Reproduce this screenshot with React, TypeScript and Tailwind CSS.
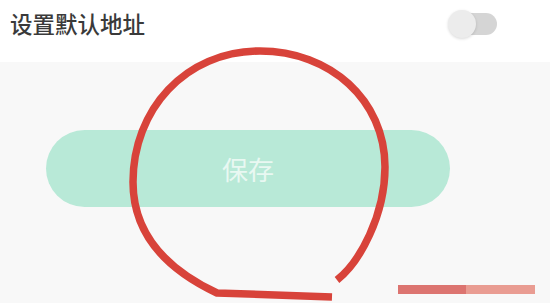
import React from 'react';

export default function App() {
  return (
    <div
      className="relative w-[550px] h-[303px] overflow-hidden bg-[#f8f8f8]"
      style={{ fontFamily: '"Noto Sans CJK SC", "Noto Sans", sans-serif' }}
    >
      {/* default address row */}
      <div className="bg-white pb-[15px]">
        <div className="flex h-[47px] items-center justify-between pl-[10px] pr-[53px]">
          <span className="text-[22.5px] leading-none font-medium text-[#3a3a3a]">设置默认地址</span>
          <div className="relative h-[22px] w-[42px] rounded-full bg-[#d5d5d5]">
            <div className="absolute left-[-7px] top-[-3px] h-[28px] w-[28px] rounded-full bg-[#ececec] shadow-[0_1px_3px_rgba(0,0,0,0.15)]" />
          </div>
        </div>
      </div>

      {/* save button */}
      <div className="pl-[46px] pt-[68px]">
        <button className="flex h-[77px] w-[404px] items-center justify-center rounded-full bg-[#b8e9d7] text-[26px] text-[#e9f8f2]">
          保存
        </button>
      </div>

      {/* red annotation */}
      <svg
        className="pointer-events-none absolute inset-0"
        width="550"
        height="303"
        viewBox="0 0 550 303"
      >
        <path
          d="M337 280 C360 262 385 215 385 167 C385 100 330 51 260 51 C185 51 133 110 133 182 C133 235 168 270 217 293 L332 297"
          fill="none"
          stroke="#d8433a"
          strokeWidth="7.5"
          strokeLinejoin="round"
        />
        <rect x="398" y="285" width="68" height="9" fill="#dc7470" />
        <rect x="466" y="285" width="69" height="9" fill="#e99c92" />
      </svg>
    </div>
  );
}
